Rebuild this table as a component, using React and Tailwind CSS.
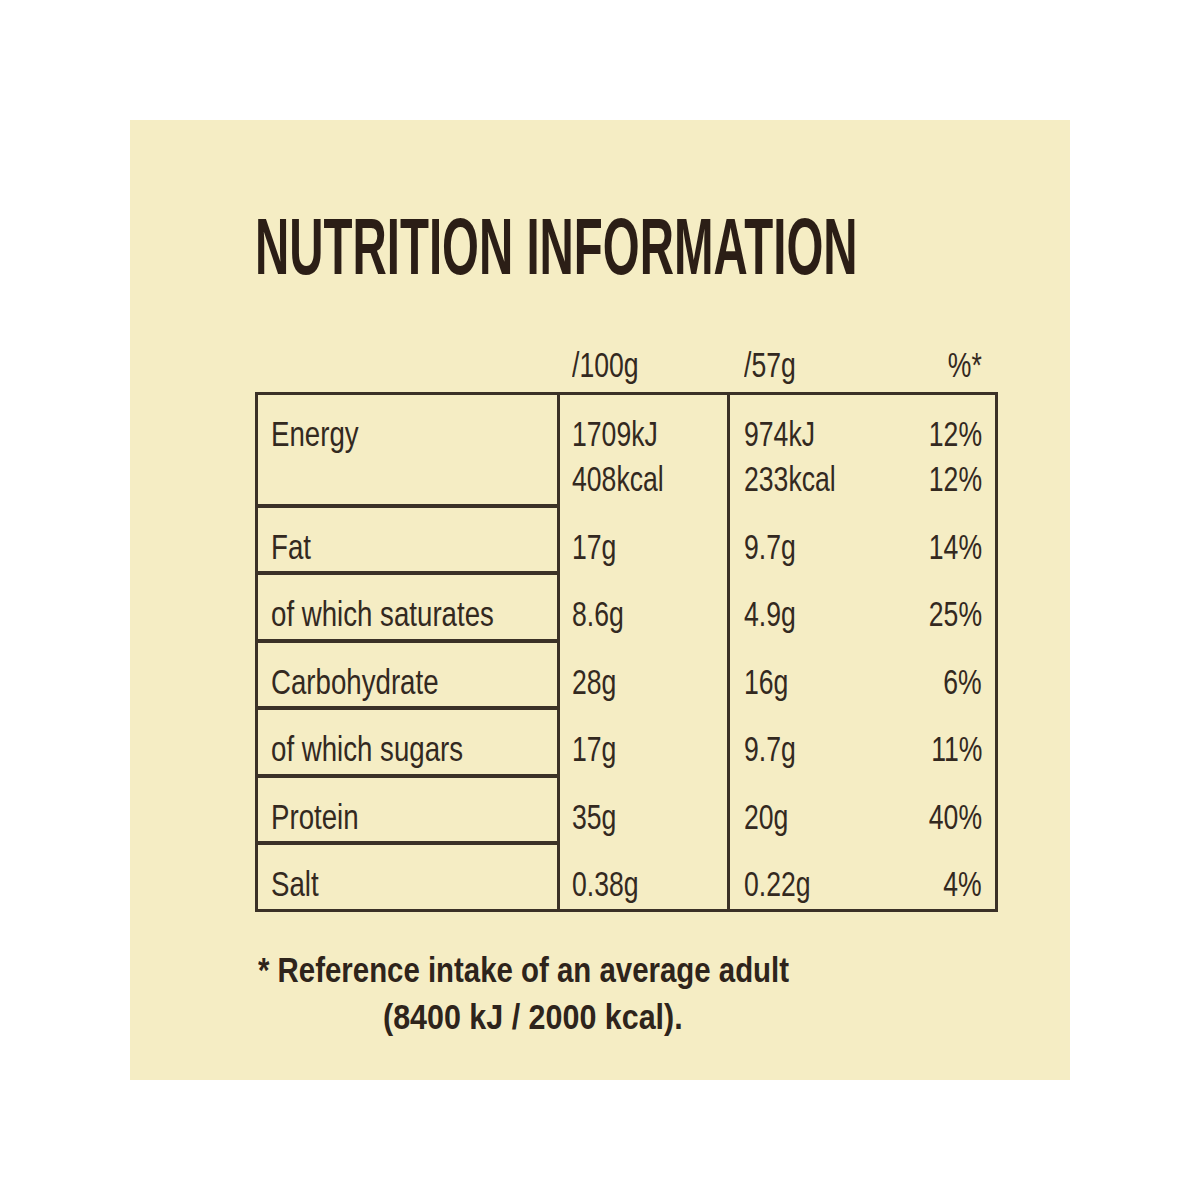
import React from 'react';

const line = 'border-[#3b3127]';

const rows = [
  { name: 'Fat', per100: '17g', per57: '9.7g', ri: '14%', h: 'h-[67px]' },
  { name: 'of which saturates', per100: '8.6g', per57: '4.9g', ri: '25%', h: 'h-[68px]' },
  { name: 'Carbohydrate', per100: '28g', per57: '16g', ri: '6%', h: 'h-[67px]' },
  { name: 'of which sugars', per100: '17g', per57: '9.7g', ri: '11%', h: 'h-[68px]' },
  { name: 'Protein', per100: '35g', per57: '20g', ri: '40%', h: 'h-[67px]' },
  { name: 'Salt', per100: '0.38g', per57: '0.22g', ri: '4%', h: 'h-[64px]', last: true },
];

function Txt({ children, right }) {
  return (
    <span
      className={`inline-block whitespace-nowrap scale-x-[0.76] ${right ? 'origin-right' : 'origin-left'}`}
    >
      {children}
    </span>
  );
}

function Label({ children }) {
  return (
    <span className="inline-block whitespace-nowrap origin-left scale-x-[0.79]">{children}</span>
  );
}

export default function App() {
  return (
    <div className="min-h-[1200px] w-[1200px] bg-white pt-[120px] pl-[130px] font-['Liberation_Sans',Arial,sans-serif] text-[#33291f]">
      <div className="w-[940px] h-[960px] bg-[#f5edc4] pl-[125px] pt-[87px]">
        {/* Title: condensed by stretching a smaller size upward */}
        <h1 className="h-[80px] text-[47.44px] leading-[47.44px] font-bold text-[#2b1e16] whitespace-nowrap">
          <span className="inline-block origin-top scale-y-[1.686]">NUTRITION INFORMATION</span>
        </h1>

        {/* Column headings */}
        <div className="mt-[60px] flex w-[743px] px-[3px] text-[35px] leading-[35px]">
          <div className="w-[302px]" />
          <div className="w-[170px] pl-[12px]">
            <Txt>/100g</Txt>
          </div>
          <div className="flex-1 flex justify-between pl-[14px] pr-[13px]">
            <Txt>/57g</Txt>
            <Txt right>%*</Txt>
          </div>
        </div>

        {/* Table */}
        <div className={`mt-[10px] w-[743px] border-[3px] ${line} text-[35px] leading-[35px]`}>
          {/* Energy */}
          <div className="flex h-[113px]">
            <div className={`w-[302px] border-r-[3px] border-b-4 ${line} pl-[13px] pt-[21px]`}>
              <Label>Energy</Label>
            </div>
            <div className={`w-[170px] border-r-[3px] ${line} pl-[12px] pt-[21px] flex flex-col gap-[10px]`}>
              <div><Txt>1709kJ</Txt></div>
              <div><Txt>408kcal</Txt></div>
            </div>
            <div className="flex-1 pl-[14px] pr-[13px] pt-[21px] flex flex-col gap-[10px]">
              <div className="flex justify-between">
                <Txt>974kJ</Txt>
                <Txt right>12%</Txt>
              </div>
              <div className="flex justify-between">
                <Txt>233kcal</Txt>
                <Txt right>12%</Txt>
              </div>
            </div>
          </div>

          {rows.map((r) => (
            <div key={r.name} className={`flex ${r.h}`}>
              <div
                className={`w-[302px] border-r-[3px] ${r.last ? '' : 'border-b-4'} ${line} pl-[13px] pt-[21px]`}
              >
                <Label>{r.name}</Label>
              </div>
              <div className={`w-[170px] border-r-[3px] ${line} pl-[12px] pt-[21px]`}>
                <Txt>{r.per100}</Txt>
              </div>
              <div className="flex-1 flex justify-between pl-[14px] pr-[13px] pt-[21px]">
                <Txt>{r.per57}</Txt>
                <Txt right>{r.ri}</Txt>
              </div>
            </div>
          ))}
        </div>

        {/* Footnote */}
        <div className="mt-[34px] text-[35px] leading-[47px] font-bold text-[#2e241b]">
          <div className="pl-[3px]">
            <span className="inline-block whitespace-nowrap origin-left scale-x-[0.84]">
              * Reference intake of an average adult
            </span>
          </div>
          <div className="pl-[128px]">
            <span className="inline-block whitespace-nowrap origin-left scale-x-[0.87]">
              (8400 kJ / 2000 kcal).
            </span>
          </div>
        </div>
      </div>
    </div>
  );
}
